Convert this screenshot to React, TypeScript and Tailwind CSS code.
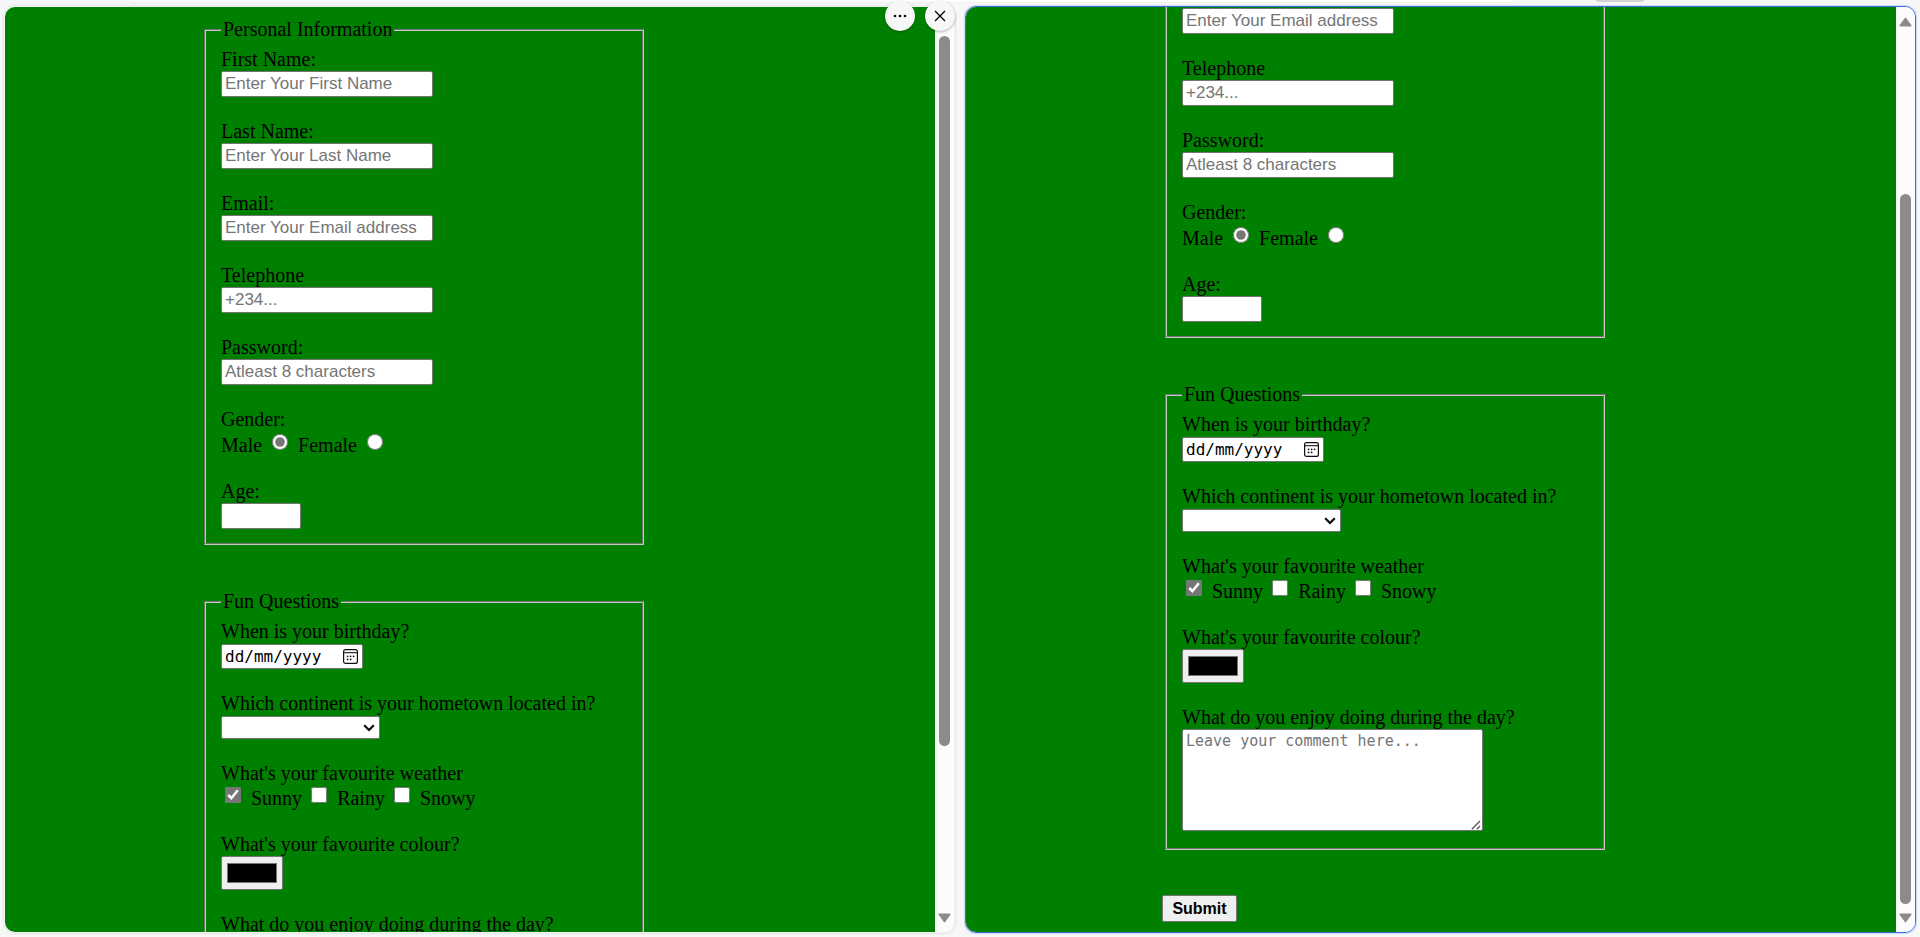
import { useId, useLayoutEffect, useRef, type ReactNode } from "react";

const LABEL = "block text-[20px] leading-[23px]";
const TEXT_BOX =
  "block h-[26px] rounded-xs border border-[#767676] bg-white px-[3px] font-['Liberation_Sans',Arial,sans-serif] text-[17px] leading-[20px] text-black outline-none placeholder:text-[#757575] placeholder:opacity-100";
const FIELDSET =
  "mx-[3px] flex w-[440px] flex-col gap-[23px] border-2 border-[#c8c8c8] px-[15px] pt-[7px] [border-style:groove]";
const LEGEND = "px-[2px] text-[20px] leading-[23px]";

function TextField({ label, type, placeholder }: { label: string; type: string; placeholder: string }) {
  const id = useId();
  return (
    <div>
      <label htmlFor={id} className={LABEL}>
        {label}
      </label>
      <input id={id} type={type} placeholder={placeholder} className={`${TEXT_BOX} w-[212px]`} />
    </div>
  );
}

function GenderField() {
  const id = useId();
  return (
    <div role="radiogroup" aria-labelledby={id}>
      <span id={id} className={LABEL}>
        Gender:
      </span>
      <div className="flex h-[26px] items-end gap-[10px] text-[20px] leading-[23px]">
        {["Male", "Female"].map((name) => (
          <label key={name} className="flex gap-[10px]">
            {name}
            <input type="radio" name={id} defaultChecked={name === "Male"} className="size-4 accent-[#767676]" />
          </label>
        ))}
      </div>
    </div>
  );
}

function WeatherField() {
  const id = useId();
  return (
    <div role="group" aria-labelledby={id}>
      <span id={id} className={LABEL}>
        What's your favourite weather
      </span>
      <div className="flex h-[25px] items-end gap-[9px] pl-[4px] text-[20px] leading-[23px]">
        {["Sunny", "Rainy", "Snowy"].map((name) => (
          <label key={name} className="flex gap-[10px]">
            <input type="checkbox" defaultChecked={name === "Sunny"} className="size-4 accent-[#767676]" />
            {name}
          </label>
        ))}
      </div>
    </div>
  );
}

function AgeField() {
  const id = useId();
  return (
    <div>
      <label htmlFor={id} className={LABEL}>
        Age:
      </label>
      <input id={id} type="text" inputMode="numeric" className={`${TEXT_BOX} w-[80px]`} />
    </div>
  );
}

function BirthdayField() {
  const id = useId();
  return (
    <div>
      <label htmlFor={id} className={LABEL}>
        When is your birthday?
      </label>
      <div className="mt-px flex h-[25px] w-[142px] items-center rounded-xs border border-[#767676] bg-white pr-[4px] pl-[3px]">
        <input
          id={id}
          type="text"
          placeholder="dd/mm/yyyy"
          className="w-full min-w-0 flex-1 bg-transparent font-['DejaVu_Sans_Mono',monospace] text-[16px] leading-[20px] text-black outline-none placeholder:text-black placeholder:opacity-100"
        />
        <button type="button" aria-label="Open calendar" className="shrink-0">
          <svg width="15" height="15" viewBox="0 0 15 15" fill="none" className="block">
            <rect x="0.6" y="0.6" width="13.8" height="13.8" rx="2" stroke="#111" strokeWidth="1.2" />
            <path d="M1 3.7H14" stroke="#111" strokeWidth="1.1" />
            <g fill="#111">
              <circle cx="4.6" cy="7.3" r="0.9" />
              <circle cx="7.6" cy="7.3" r="0.9" />
              <circle cx="10.6" cy="7.3" r="0.9" />
              <circle cx="4.6" cy="10.4" r="0.9" />
              <circle cx="7.6" cy="10.4" r="0.9" />
            </g>
          </svg>
        </button>
      </div>
    </div>
  );
}

function ContinentField() {
  const id = useId();
  return (
    <div>
      <label htmlFor={id} className={LABEL}>
        Which continent is your hometown located in?
      </label>
      <div className="relative mt-px w-[159px]">
        <select
          id={id}
          defaultValue=""
          className="block h-[23px] w-full appearance-none rounded-xs border border-[#767676] bg-white px-[3px] font-['Liberation_Sans',Arial,sans-serif] text-[17px] leading-[20px] outline-none"
        >
          <option value=""></option>
        </select>
        <svg
          width="12"
          height="8"
          viewBox="0 0 12 8"
          fill="none"
          className="pointer-events-none absolute top-[8px] right-[5px]"
        >
          <path d="M1.2 1.2L6 6L10.8 1.2" stroke="#000" strokeWidth="2.1" />
        </svg>
      </div>
    </div>
  );
}

function ColourField() {
  const id = useId();
  return (
    <div>
      <label htmlFor={id} className={LABEL}>
        What's your favourite colour?
      </label>
      <input
        id={id}
        type="color"
        defaultValue="#000000"
        className="block h-[34px] w-[62px] appearance-none rounded-xs border border-[#767676] bg-[#efefef] px-[5px] py-[6px] [&::-webkit-color-swatch]:rounded-none [&::-webkit-color-swatch]:border [&::-webkit-color-swatch]:border-[#767676] [&::-webkit-color-swatch-wrapper]:p-0"
      />
    </div>
  );
}

function CommentField() {
  const id = useId();
  return (
    <div>
      <label htmlFor={id} className={LABEL}>
        What do you enjoy doing during the day?
      </label>
      <div className="relative w-[301px]">
        <textarea
          id={id}
          placeholder="Leave your comment here..."
          className="block h-[102px] w-full resize-none rounded-xs border border-[#767676] bg-white px-[3px] py-px font-['DejaVu_Sans_Mono',monospace] text-[15px] leading-[20px] text-black outline-none placeholder:text-[#757575] placeholder:opacity-100"
        />
        <svg
          width="10"
          height="10"
          viewBox="0 0 10 10"
          className="pointer-events-none absolute right-[2px] bottom-[1px]"
        >
          <path d="M0.8 9.2L9 1M5.8 9.2L9 6" stroke="#555" strokeWidth="1.3" />
        </svg>
      </div>
    </div>
  );
}

function SurveyForm() {
  return (
    <form
      onSubmit={(event) => event.preventDefault()}
      className="flex flex-col items-start gap-[45px] bg-[#008000] pt-[11px] pb-[10px] pl-[196px]"
    >
      <fieldset className={`${FIELDSET} pb-[14px]`}>
        <legend className={LEGEND}>Personal Information</legend>
        <TextField label="First Name:" type="text" placeholder="Enter Your First Name" />
        <TextField label="Last Name:" type="text" placeholder="Enter Your Last Name" />
        <TextField label="Email:" type="email" placeholder="Enter Your Email address" />
        <TextField label="Telephone" type="tel" placeholder="+234..." />
        <TextField label="Password:" type="password" placeholder="Atleast 8 characters" />
        <GenderField />
        <AgeField />
      </fieldset>
      <fieldset className={`${FIELDSET} pb-[17px]`}>
        <legend className={LEGEND}>Fun Questions</legend>
        <BirthdayField />
        <ContinentField />
        <WeatherField />
        <ColourField />
        <CommentField />
      </fieldset>
      <button
        type="submit"
        className="h-[27px] w-[75px] rounded-xs border border-[#767676] bg-[#efefef] text-center font-['Liberation_Sans',Arial,sans-serif] text-[16px] leading-[23px] font-bold text-black"
      >
        Submit
      </button>
    </form>
  );
}

function ScrollBar({ atEnd }: { atEnd: boolean }) {
  return (
    <div
      aria-hidden="true"
      className="flex w-[19px] shrink-0 flex-col items-center gap-[9px] bg-[#fcfcfc] pt-[10px] pb-[9px]"
    >
      <svg width="13" height="10" viewBox="0 0 13 10" className="shrink-0">
        <path d="M6.5 1.4L11.8 8.6H1.2Z" fill="#8b8b8b" stroke="#8b8b8b" strokeWidth="1.6" strokeLinejoin="round" />
      </svg>
      <div className={`flex flex-1 ${atEnd ? "flex-col" : "flex-col-reverse"}`}>
        <div className="flex-2" />
        <div className="w-[11px] flex-9 rounded-full bg-[#8b8b8b]" />
      </div>
      <svg width="13" height="10" viewBox="0 0 13 10" className="shrink-0">
        <path d="M6.5 8.6L11.8 1.4H1.2Z" fill="#8b8b8b" stroke="#8b8b8b" strokeWidth="1.6" strokeLinejoin="round" />
      </svg>
    </div>
  );
}

function Pane({ active, children }: { active: boolean; children?: ReactNode }) {
  const view = useRef<HTMLDivElement>(null);
  useLayoutEffect(() => {
    if (active && view.current) view.current.scrollTop = view.current.scrollHeight;
  }, [active]);

  return (
    <section
      className={`relative flex min-w-0 flex-1 rounded-[11px] border ${
        active ? "border-[#3b6fe0] shadow-[0_0_1px_1px_#c9d6f6]" : "border-[#f0f0f0] shadow-[0_0_3px_rgba(0,0,0,0.15)]"
      }`}
    >
      <div className="flex min-w-0 flex-1 overflow-hidden rounded-[10px]">
        <div ref={view} className="min-w-0 flex-1 overflow-y-auto bg-[#008000] [scrollbar-width:none]">
          <SurveyForm />
        </div>
        <ScrollBar atEnd={active} />
      </div>
      {children}
    </section>
  );
}

const ROUND_BUTTON =
  "flex size-[30px] items-center justify-center rounded-full bg-[#f7f7f7] shadow-[0_1px_3px_rgba(0,0,0,0.3)]";

export default function App() {
  return (
    <div className="flex h-screen flex-col bg-[#f7f7f7] font-['Liberation_Serif','Times_New_Roman',serif] text-black">
      <div className="flex h-[6px] shrink-0 items-start pr-[276px] pl-[130px]">
        <div className="h-[3px] flex-1 rounded-b-[3px] border-b border-[#efefef] bg-white" />
        <div className="ml-[82px] h-[2px] w-[48px] rounded-b-[2px] bg-[#d3d3d3]" />
      </div>
      <main className="flex min-h-0 flex-1 gap-[10px] px-[4px] pb-[4px]">
        <Pane active={false}>
          <div className="absolute -top-[6px] right-[-1px] flex gap-[10px]">
            <button type="button" aria-label="More options" className={ROUND_BUTTON}>
              <svg width="14" height="4" viewBox="0 0 14 4" fill="#000">
                <circle cx="2" cy="2" r="1.3" />
                <circle cx="7" cy="2" r="1.3" />
                <circle cx="12" cy="2" r="1.3" />
              </svg>
            </button>
            <button type="button" aria-label="Close" className={ROUND_BUTTON}>
              <svg width="12" height="12" viewBox="0 0 12 12" fill="none">
                <path d="M1 1L11 11M11 1L1 11" stroke="#000" strokeWidth="1.3" />
              </svg>
            </button>
          </div>
        </Pane>
        <Pane active />
      </main>
    </div>
  );
}
